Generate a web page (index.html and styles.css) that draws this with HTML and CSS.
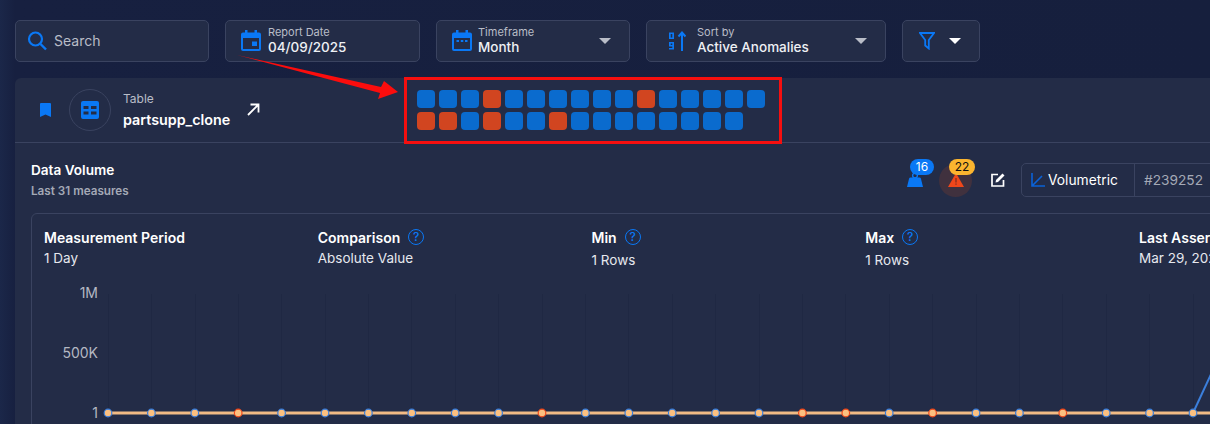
FILE: index.html
```html
<!DOCTYPE html>
<html lang="en">
<head>
<meta charset="UTF-8" />
<meta name="viewport" content="width=device-width, initial-scale=1" />
<title>Data Volume</title>
<link rel="stylesheet" href="styles.css">
</head>
<body>

<div class="toolbar">
  <div class="field field-search">
    <svg class="icon" width="22" height="22" viewBox="0 0 22 22"><circle cx="9.5" cy="9" r="6.5" fill="none" stroke="#0a78f5" stroke-width="2.2"/><path d="M14.5 14l5.5 5.5" stroke="#0a78f5" stroke-width="2.4" fill="none"/></svg>
    <span class="search-text">Search</span>
  </div>
  <div class="field field-date">
    <svg class="icon" width="20" height="22" viewBox="0 0 20 22"><path d="M4 0h2.5v2.5h7V0H16v2.5h2a2 2 0 0 1 2 2V19a2 2 0 0 1-2 2H2a2 2 0 0 1-2-2V4.500a2 2 0 0 1 2-2h2zM2 8v11h16V8z" fill="#0a78f5"/><rect x="11" y="11.500" width="5" height="4.500" fill="#0a78f5"/></svg>
    <div class="stack">
      <span class="field-label">Report Date</span>
      <span class="field-value">04/09/2025</span>
    </div>
  </div>
  <div class="field field-time">
    <svg class="icon" width="20" height="22" viewBox="0 0 20 22"><path d="M4 0h2.500v2.500h7V0H16v2.500h2a2 2 0 0 1 2 2V19a2 2 0 0 1-2 2H2a2 2 0 0 1-2-2V4.500a2 2 0 0 1 2-2h2zM2 8v11h16V8z" fill="#0a78f5"/><path d="M4.500 10h2.500v2H4.500zM8.800 10h2.500v2H8.800zM13 10h2.500v2H13z" fill="#0a78f5"/></svg>
    <div class="stack">
      <span class="field-label">Timeframe</span>
      <span class="field-value">Month</span>
    </div>
    <span class="caret"></span>
  </div>
  <div class="field field-sort">
    <svg class="icon" width="18" height="20" viewBox="0 0 18 20"><path d="M1 1.500h5v6.500H1zM2.700 3v3.500h1.600V3z" fill="#0a78f5" fill-rule="evenodd"/><path d="M1 11h5v7.500H1v-1.500h3.300v-1.500H1zM2.700 12.500v1.500h1.600v-1.500z" fill="#0a78f5" fill-rule="evenodd"/><path d="M14 20V2M10.500 5.500L14 1.500l3.500 4" fill="none" stroke="#0a78f5" stroke-width="2"/></svg>
    <div class="stack">
      <span class="field-label">Sort by</span>
      <span class="field-value">Active Anomalies</span>
    </div>
    <span class="caret"></span>
  </div>
  <div class="field field-filter">
    <svg width="16" height="18" viewBox="0 0 16 18"><path d="M1 1h14l-5.200 7v8.500L6.200 13.500V8z" fill="none" stroke="#0a78f5" stroke-width="1.800"/></svg>
    <span class="caret caret-white"></span>
  </div>
</div>

<div class="card">
  <div class="card-head">
    <div class="asset">
      <svg class="bookmark" width="11" height="14" viewBox="0 0 11 14"><path d="M1 0h9a1 1 0 0 1 1 1v13l-5.500-2.500L0 14V1a1 1 0 0 1 1-1z" fill="#0a78f5"/></svg>
      <div class="asset-circle">
        <svg width="18" height="18" viewBox="0 0 18 18"><path d="M2 0h14a2 2 0 0 1 2 2v14a2 2 0 0 1-2 2H2a2 2 0 0 1-2-2V2a2 2 0 0 1 2-2zM2.500 5v3h5V5zm7.500 0v3h5.500V5zM2.500 10.500v3h5v-3zm7.500 0v3h5.500v-3z" fill="#0a78f5" fill-rule="evenodd"/></svg>
      </div>
      <div class="asset-text">
        <span class="asset-type">Table</span>
        <span class="asset-name">partsupp_clone</span>
      </div>
      <svg class="asset-link" width="13" height="13" viewBox="0 0 13 13"><path d="M1 12L11.500 1.500M3.500 1.500h8v8" fill="none" stroke="#fff" stroke-width="1.800"/></svg>
    </div>
    <div class="measures">
      <i class="sq"></i><i class="sq"></i><i class="sq"></i><i class="sq bad"></i><i class="sq"></i><i class="sq"></i><i class="sq"></i><i class="sq"></i>
      <i class="sq"></i><i class="sq"></i><i class="sq bad"></i><i class="sq"></i><i class="sq"></i><i class="sq"></i><i class="sq"></i><i class="sq"></i>
      <i class="sq bad"></i><i class="sq bad"></i><i class="sq"></i><i class="sq bad"></i><i class="sq"></i><i class="sq"></i><i class="sq bad"></i><i class="sq"></i>
      <i class="sq"></i><i class="sq"></i><i class="sq"></i><i class="sq"></i><i class="sq"></i><i class="sq"></i><i class="sq"></i>
    </div>
  </div>

  <div class="section-head">
    <div class="section-title">
      <h2>Data Volume</h2>
      <p>Last 31 measures</p>
    </div>
    <div class="section-actions">
      <div class="people">
        <svg width="16" height="15" viewBox="0 0 16 15"><circle cx="8" cy="3.500" r="2.400" fill="none" stroke="#0a78f5" stroke-width="1.400"/><path d="M3.500 5.500h9a1.500 1.500 0 0 1 1.400 1.100L16 15H0l2.100-8.400a1.500 1.500 0 0 1 1.400-1.100z" fill="#0a78f5"/></svg>
        <span class="badge badge-blue">16</span>
      </div>
      <div class="alert">
        <svg width="16" height="14" viewBox="0 0 16 14"><path d="M8 0l8 14H0z" fill="#f0471a"/><path d="M7.400 5h1.200v4.500H7.400zM7.400 10.500h1.200v1.300H7.400z" fill="#7a2a20"/></svg>
        <span class="badge badge-amber">22</span>
      </div>
      <svg class="edit" width="14" height="14" viewBox="0 0 14 14"><path d="M7 1.500H1v11.500h11.500V7" fill="none" stroke="#fff" stroke-width="1.700"/><path d="M11.500 .5l2 2L7 9l-2.500.5L5 7z" fill="#fff"/></svg>
      <div class="check-tag">
        <div class="check-type">
          <svg width="14" height="14" viewBox="0 0 14 14"><path d="M1 0v13h13M1 13L11 3" fill="none" stroke="#0a62d8" stroke-width="1.600"/></svg>
          <span>Volumetric</span>
        </div>
        <span class="check-id">#239252</span>
      </div>
    </div>
  </div>

  <div class="panel">
    <div class="meta">
      <div class="meta-col">
        <div class="meta-label">Measurement Period</div>
        <div class="meta-value">1 Day</div>
      </div>
      <div class="meta-col">
        <div class="meta-label">Comparison <span class="help">?</span></div>
        <div class="meta-value">Absolute Value</div>
      </div>
      <div class="meta-col">
        <div class="meta-label">Min <span class="help">?</span></div>
        <div class="meta-value low">1 Rows</div>
      </div>
      <div class="meta-col">
        <div class="meta-label">Max <span class="help">?</span></div>
        <div class="meta-value low">1 Rows</div>
      </div>
      <div class="meta-col">
        <div class="meta-label">Last Asserted</div>
        <div class="meta-value">Mar 29, 2025</div>
      </div>
    </div>
    <!-- viewBox uses page coordinates so the points read like the screenshot -->
    <svg class="chart" width="1178" height="140" viewBox="32 284 1178 140">
      <text class="tick" x="98" y="298">1M</text>
      <text class="tick" x="98" y="358">500K</text>
      <text class="tick" x="98" y="418">1</text>
      <path class="grid" d="M108.500 294V413M151.500 294V413M195.500 294V413M238.500 294V413M281.500 294V413M325.500 294V413M368.500 294V413M411.500 294V413M455.500 294V413M498.500 294V413M542.500 294V413M585.500 294V413M628.500 294V413M672.500 294V413M715.500 294V413M759.500 294V413M802.500 294V413M845.500 294V413M889.500 294V413M932.500 294V413M976.500 294V413M1019.500 294V413M1062.500 294V413M1106.500 294V413M1149.500 294V413M1193.500 294V413"/>
      <path class="line-blue" d="M1193 413L1212 372"/>
      <path class="line-orange" d="M108 413H1210"/>
      <circle class="dot" cx="108" cy="413" r="3.800"/>
      <circle class="dot" cx="151.400" cy="413" r="3.800"/>
      <circle class="dot" cx="194.800" cy="413" r="3.800"/>
      <circle class="dot bad" cx="238.200" cy="413" r="3.800"/>
      <circle class="dot" cx="281.600" cy="413" r="3.800"/>
      <circle class="dot" cx="325" cy="413" r="3.800"/>
      <circle class="dot" cx="368.400" cy="413" r="3.800"/>
      <circle class="dot" cx="411.800" cy="413" r="3.800"/>
      <circle class="dot" cx="455.200" cy="413" r="3.800"/>
      <circle class="dot" cx="498.600" cy="413" r="3.800"/>
      <circle class="dot bad" cx="542" cy="413" r="3.800"/>
      <circle class="dot" cx="585.400" cy="413" r="3.800"/>
      <circle class="dot" cx="628.800" cy="413" r="3.800"/>
      <circle class="dot" cx="672.200" cy="413" r="3.800"/>
      <circle class="dot" cx="715.600" cy="413" r="3.800"/>
      <circle class="dot" cx="759" cy="413" r="3.800"/>
      <circle class="dot bad" cx="802.400" cy="413" r="3.800"/>
      <circle class="dot bad" cx="845.800" cy="413" r="3.800"/>
      <circle class="dot" cx="889.200" cy="413" r="3.800"/>
      <circle class="dot bad" cx="932.600" cy="413" r="3.800"/>
      <circle class="dot" cx="976" cy="413" r="3.800"/>
      <circle class="dot" cx="1019.400" cy="413" r="3.800"/>
      <circle class="dot bad" cx="1062.800" cy="413" r="3.800"/>
      <circle class="dot" cx="1106.200" cy="413" r="3.800"/>
      <circle class="dot" cx="1149.600" cy="413" r="3.800"/>
      <circle class="dot" cx="1193" cy="413" r="3.800"/>
    </svg>
  </div>
</div>

<!-- annotation drawn on top of the screenshot -->
<div class="callout-box"></div>
<svg class="callout-arrow" width="1210" height="424" viewBox="0 0 1210 424"><polygon points="237,55 381,87 384,81 398,92 378,99 380,93" fill="#fb0d0d"/></svg>

</body>
</html>
```

FILE: styles.css
```css
* {
  box-sizing: border-box;
  margin: 0;
  padding: 0;
}
html, body {
  height: 424px;
  overflow: hidden;
}
body {
  position: relative;
  font-family: "Inter", "Liberation Sans", sans-serif;
  background: linear-gradient(90deg, #1b2749 0, #172040 15px, #161f3d 100%);
  color: #fff;
}

/* top filters */
.toolbar {
  display: flex;
  gap: 16px;
  padding: 20px 0 0 15px;
}
.field {
  display: flex;
  align-items: center;
  height: 42px;
  background: #232c47;
  border: 1px solid #3a4360;
  border-radius: 5px;
}
.field-search { width: 194px; padding-left: 10px; }
.field-date { width: 195px; padding-left: 15px; }
.field-time { width: 194px; padding-left: 15px; }
.field-sort { width: 240px; padding-left: 21px; }
.field-filter { width: 78px; padding-left: 16px; gap: 14px; }
.icon { flex: none; }
.search-text {
  margin: 0 0 2px 6px;
  font-size: 14px;
  color: #b9bdc8;
}
.stack {
  display: flex;
  flex-direction: column;
  margin: 0 0 2px 7px;
}
.field-time .stack { margin-left: 6px; }
.field-sort .stack { margin-left: 11px; }
.field-label {
  font-size: 11px;
  line-height: 13px;
  color: #b9bdc8;
}
.field-value {
  font-size: 13.5px;
  line-height: 16px;
  font-weight: 500;
  color: #eef0f4;
}
.caret {
  margin-left: auto;
  margin-right: 18px;
  width: 0;
  height: 0;
  border-left: 6px solid transparent;
  border-right: 6px solid transparent;
  border-top: 6px solid #b9bdc8;
}
.caret-white {
  margin: 0;
  border-top-color: #fff;
}

/* card */
.card {
  width: 1300px;
  margin: 16px 0 0 15px;
  background: #232c47;
  border-radius: 6px 6px 0 0;
}
.card-head {
  display: flex;
  align-items: center;
  height: 65px;
  border-bottom: 1px solid #3a4360;
}
.asset {
  display: flex;
  align-items: center;
  width: 402px;
  padding-left: 25px;
}
.bookmark { flex: none; }
.asset-circle {
  display: flex;
  align-items: center;
  justify-content: center;
  width: 42px;
  height: 42px;
  margin-left: 18px;
  border: 1px solid #3a4360;
  border-radius: 50%;
}
.asset-text {
  display: flex;
  flex-direction: column;
  margin: 0 0 1px 12px;
}
.asset-type {
  font-size: 12px;
  line-height: 16px;
  color: #b9bdc8;
}
.asset-name {
  margin-top: 4px;
  font-size: 14.3px;
  line-height: 18px;
  font-weight: 600;
}
.asset-link { margin: -2px 0 0 17px; }
.measures {
  display: grid;
  grid-template-columns: repeat(16, 18px);
  gap: 4px;
}
.sq {
  width: 18px;
  height: 18px;
  background: #0a6bce;
  border-radius: 4px;
}
.sq.bad { background: #d14520; }

/* section header */
.section-head {
  display: flex;
  height: 70px;
  padding-left: 16px;
}
.section-title {
  width: 876px;
  padding-top: 19px;
}
.section-title h2 {
  font-size: 13.6px;
  line-height: 16px;
  font-weight: 600;
}
.section-title p {
  margin-top: 5px;
  font-size: 11.7px;
  line-height: 16px;
  font-weight: 600;
  color: #a4a9b6;
}
.section-actions {
  display: flex;
  align-items: center;
  height: 34px;
  margin-top: 20px;
}
.people {
  position: relative;
  width: 16px;
  height: 15px;
  margin-top: -2px;
}
.people svg, .alert svg { display: block; }
.badge {
  position: absolute;
  display: block;
  height: 16px;
  border-radius: 8px;
  font-size: 12px;
  line-height: 16px;
  text-align: center;
}
.badge-blue {
  top: -13px;
  left: 3px;
  width: 24px;
  background: #0a78f5;
}
.badge-amber {
  top: -5px;
  left: 10px;
  width: 26px;
  color: #111;
  background: #fbb52f;
}
.alert {
  position: relative;
  display: flex;
  align-items: center;
  justify-content: center;
  width: 33px;
  height: 33px;
  margin-left: 16px;
  background: #40313e;
  border-radius: 50%;
}
.edit { margin-left: 19px; }
.check-tag {
  display: flex;
  align-items: center;
  height: 34px;
  margin-left: 16px;
  border: 1px solid #3a4360;
  border-radius: 5px;
}
.check-type {
  display: flex;
  align-items: center;
  gap: 3px;
  width: 113px;
  height: 100%;
  padding-left: 9px;
  font-size: 13.8px;
  border-right: 1px solid #3a4360;
}
.check-id {
  padding: 0 30px 0 9px;
  font-size: 13.7px;
  color: #a4a9b6;
}

/* panel with meta row and chart */
.panel {
  width: 1260px;
  margin-left: 16px;
  background: #232c47;
  border: 1px solid #3a4360;
  border-radius: 6px 6px 0 0;
}
.meta {
  display: grid;
  grid-template-columns: repeat(5, 273.75px);
  height: 70px;
  padding: 14px 0 0 12px;
}
.meta-label {
  display: flex;
  align-items: center;
  gap: 8px;
  height: 18px;
  font-size: 14px;
  font-weight: 600;
  white-space: nowrap;
}
.meta-value {
  margin-top: 3px;
  font-size: 13.5px;
  line-height: 18px;
  color: #e6e8ee;
  white-space: nowrap;
}
.meta-value.low { margin-top: 5px; }
.help {
  display: inline-block;
  width: 16px;
  height: 16px;
  border: 1.500px solid #0a78f5;
  border-radius: 50%;
  font-size: 12px;
  line-height: 13px;
  font-weight: 500;
  text-align: center;
  color: #0a78f5;
}
.chart { display: block; }
.tick {
  font-size: 14px;
  fill: #b4b8c3;
  text-anchor: end;
}
.grid { stroke: #1f2843; stroke-width: 1; fill: none; }
.line-blue { stroke: #3b7fdc; stroke-width: 2; fill: none; }
.line-orange { stroke: #f2bb85; stroke-width: 3; fill: none; }
.dot { fill: #fcc080; stroke: #3b7fdc; stroke-width: 1.200; }
.dot.bad { stroke: #f0491b; }

/* red annotation */
.callout-box {
  position: absolute;
  left: 404px;
  top: 77px;
  width: 378px;
  height: 67px;
  border: 3px solid #f50f0f;
}
.callout-arrow {
  position: absolute;
  left: 0;
  top: 0;
}
```
